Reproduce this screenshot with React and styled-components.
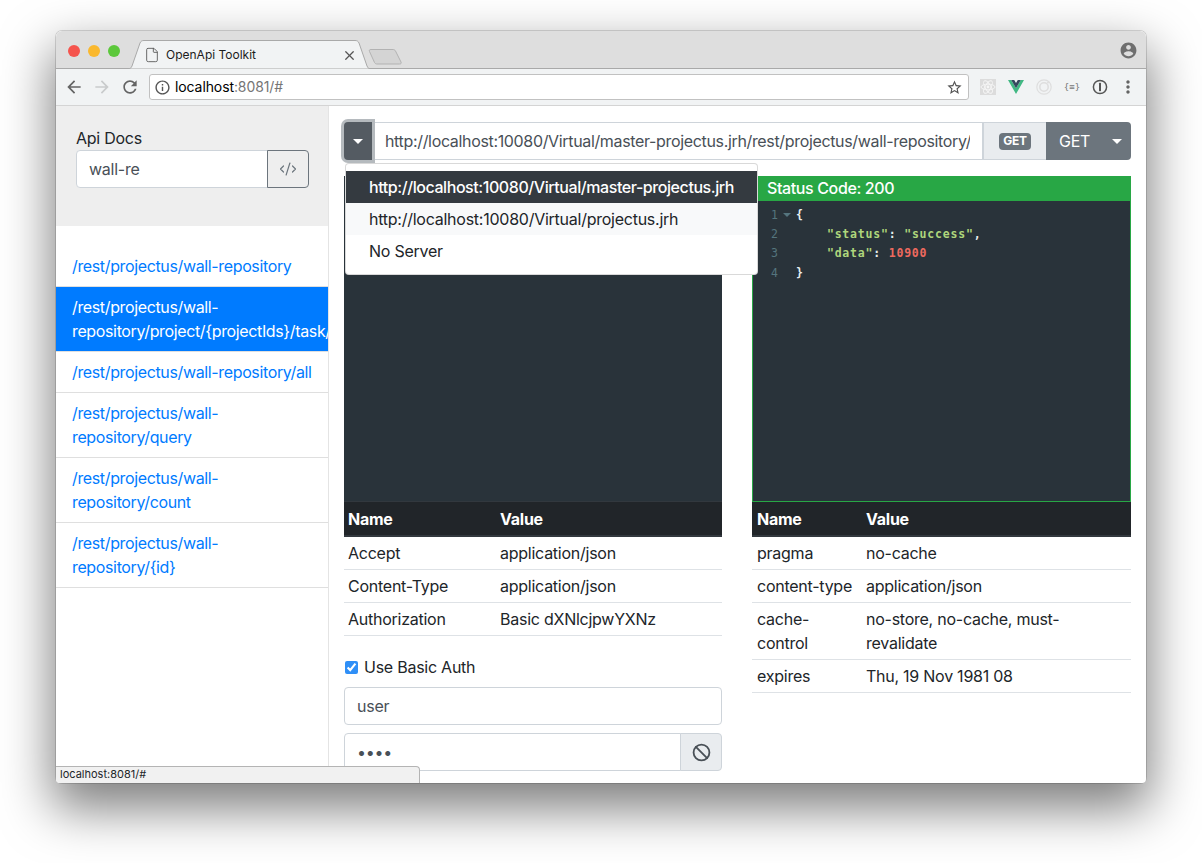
import React from "react";
import styled, { createGlobalStyle } from "styled-components";
import { CodeXml, File, Ban, X } from "lucide-react";

const GlobalStyle = createGlobalStyle`
  html, body {
    margin: 0;
    padding: 0;
    background: #fff;
  }
  body {
    font-family: Inter, "Liberation Sans", sans-serif;
    font-size: 16px;
    line-height: 24px;
    letter-spacing: -0.25px;
    color: #212529;
  }
  * {
    box-sizing: border-box;
  }
`;

const Page = styled.div`
  width: 1202px;
  height: 863px;
  padding: 31px 56px 80px;
  overflow: hidden;
`;

const Window = styled.div`
  position: relative;
  width: 1090px;
  height: 752px;
  display: flex;
  flex-direction: column;
  border-radius: 6px 6px 4px 4px;
  background: #fff;
  overflow: hidden;
`;

const Shadow = styled.div`
  border-radius: 6px;
  box-shadow: 0 0 0 1px rgba(0, 0, 0, 0.14), 0 22px 50px 4px rgba(0, 0, 0, 0.5);
`;

const TitleBar = styled.div`
  height: 38px;
  flex: none;
  display: flex;
  align-items: flex-end;
  padding-left: 12px;
  background: #dedede;
  box-shadow: inset 0 -1px 0 #a9a9a9;
`;

const Lights = styled.div`
  display: flex;
  gap: 8px;
  align-self: flex-start;
  margin-top: 14px;
`;

const Light = styled.span`
  width: 12px;
  height: 12px;
  border-radius: 50%;
  background: ${(p) => p.$color};
`;

const Tab = styled.div`
  position: relative;
  width: 242px;
  height: 29px;
  margin-left: 8px;
  display: flex;
  align-items: center;
  padding: 1px 13px 0 16px;
  font-size: 12px;
  letter-spacing: 0;
  color: #1c1c1c;
`;

const TabShape = styled.svg`
  position: absolute;
  inset: 0;
`;

const TabIcon = styled(File)`
  position: relative;
  flex: none;
  margin-right: 6px;
  color: #555;
`;

const TabTitle = styled.span`
  position: relative;
  flex: 1;
`;

const TabClose = styled(X)`
  position: relative;
  flex: none;
  color: #555;
`;

const NewTab = styled.svg`
  margin: 0 0 4px -3px;
  flex: none;
`;

const TitleSpacer = styled.div`
  flex: 1;
`;

const Profile = styled.svg`
  align-self: center;
  margin-right: 8px;
  color: #6f6f6f;
`;

const ToolBar = styled.div`
  height: 37px;
  flex: none;
  display: flex;
  align-items: center;
  padding: 0 4px;
  background: #f1f3f4;
  border-bottom: 1px solid #d4d4d4;
`;

const ToolButton = styled.div`
  width: 28px;
  height: 28px;
  flex: none;
  display: flex;
  align-items: center;
  justify-content: center;
  color: ${(p) => p.$color || "#646464"};
`;

const Omnibox = styled.div`
  flex: 1;
  height: 26px;
  margin: 0 5px;
  display: flex;
  align-items: center;
  padding: 0 5px 0 4px;
  background: #fff;
  border: 1px solid #c1c1c1;
  border-radius: 3px;
  font-size: 14px;
  letter-spacing: -0.1px;
  color: #555;
`;

const OmniText = styled.span`
  flex: 1;
  margin-left: 4px;
  color: #000;
`;

const OmniMuted = styled.span`
  color: #767676;
`;

const ExtText = styled.span`
  font-family: "DejaVu Sans Mono", monospace;
  font-size: 9px;
  letter-spacing: 0;
  color: #777;
`;

const Content = styled.div`
  flex: 1;
  min-height: 0;
  display: flex;
`;

const Sidebar = styled.aside`
  width: 273px;
  flex: none;
  border-right: 1px solid #e4e4e4;
`;

const SideHead = styled.div`
  height: 120px;
  padding: 20px 19px 0 20px;
  background: #eee;
`;

const SideLabel = styled.div`
  height: 24px;
`;

const InputGroup = styled.div`
  display: flex;
  height: 38px;
`;

const TextField = styled.input`
  flex: 1;
  min-width: 0;
  padding: 6px 12px;
  border: 1px solid #ced4da;
  border-radius: ${(p) => (p.$joined ? "4px 0 0 4px" : "4px")};
  background: #fff;
  font: inherit;
  letter-spacing: inherit;
  color: #495057;
  outline: none;
`;

const OutlineButton = styled.div`
  width: 42px;
  flex: none;
  display: flex;
  align-items: center;
  justify-content: center;
  margin-left: -1px;
  border: 1px solid #6c757d;
  border-radius: 0 4px 4px 0;
  color: #6c757d;
`;

const DocList = styled.ul`
  list-style: none;
  margin: 20px 0 0;
  padding: 0;
  overflow: hidden;
`;

const DocItem = styled.li`
  padding: 8px 14px 8px 16px;
  letter-spacing: -0.36px;
  color: ${(p) => (p.$active ? "#fff" : "#007bff")};
  background: ${(p) => (p.$active ? "#007bff" : "#fff")};
  background-clip: padding-box;
  border-bottom: 1px solid #dfdfdf;
`;

const Main = styled.main`
  flex: 1;
  min-width: 0;
  padding: 16px 15px 0;
  overflow: hidden;
`;

const UrlBar = styled.div`
  display: flex;
  height: 38px;
  margin-bottom: 16px;
`;

const Toggle = styled.div`
  position: relative;
  z-index: 1;
  width: 28px;
  margin-right: 3px;
  flex: none;
  display: flex;
  align-items: center;
  justify-content: center;
  background: #545b62;
  border-radius: 4px 0 0 4px;
  box-shadow: 0 0 0 3px rgba(108, 117, 125, 0.5);
`;

const Caret = styled.span`
  width: 0;
  height: 0;
  border-top: 5px solid #fff;
  border-left: 5px solid transparent;
  border-right: 5px solid transparent;
`;

const UrlInput = styled.input`
  flex: 1;
  min-width: 0;
  padding: 6px 12px 6px 10px;
  border: 1px solid #ced4da;
  border-left: none;
  background: #fff;
  font: inherit;
  letter-spacing: -0.34px;
  color: #495057;
  outline: none;
`;

const Addon = styled.div`
  width: 63px;
  flex: none;
  display: flex;
  align-items: center;
  justify-content: center;
  background: #e9ecef;
  border: 1px solid #ced4da;
  border-right: none;
`;

const Badge = styled.span`
  padding: 0 4px;
  height: 17px;
  display: flex;
  align-items: center;
  border-radius: 4px;
  background: #6c757d;
  color: #fff;
  font-size: 12px;
  font-weight: 700;
`;

const MethodButton = styled.div`
  width: 85px;
  flex: none;
  display: flex;
  align-items: center;
  justify-content: space-between;
  padding: 0 9px 0 13px;
  background: #6c757d;
  border-radius: 0 4px 4px 0;
  color: #fff;
`;

const ServerMenu = styled.div`
  position: absolute;
  z-index: 2;
  left: 289px;
  top: 132px;
  width: 413px;
  padding: 7px 0;
  background: #fff;
  border: 1px solid rgba(0, 0, 0, 0.15);
  border-radius: 4px;
`;

const ServerItem = styled.div`
  height: 32px;
  padding: 4px 23px;
  white-space: nowrap;
  letter-spacing: ${(p) => (p.$active ? "-0.43px" : "inherit")};
  color: ${(p) => (p.$active ? "#fff" : "#212529")};
  font-weight: ${(p) => (p.$active ? 500 : 400)};
  background: ${(p) => (p.$active ? "#343a40" : p.$hover ? "#f8f9fa" : "transparent")};
`;

const Columns = styled.div`
  display: grid;
  grid-template-columns: 378px 379px;
  column-gap: 30px;
`;

const Editor = styled.div`
  height: ${(p) => p.$height}px;
  background: #29333a;
  border-left: ${(p) => (p.$framed ? "1px solid #28a745" : "none")};
  border-right: ${(p) => (p.$framed ? "1px solid #28a745" : "none")};
  border-bottom: 1px solid ${(p) => (p.$framed ? "#28a745" : "#32383e")};
  overflow: hidden;
`;

const StatusBar = styled.div`
  height: 25px;
  padding-left: 15px;
  background: #28a745;
  color: #fff;
  font-weight: 500;
  line-height: 25px;
  letter-spacing: -0.38px;
`;

const CodeLines = styled.div`
  padding-top: 4px;
  font-family: "DejaVu Sans Mono", monospace;
  font-size: 11.5px;
  font-weight: 700;
  letter-spacing: 0;
  color: #e8eef0;
`;

const CodeLine = styled.div`
  display: flex;
  align-items: center;
  height: 19.4px;
`;

const LineNo = styled.span`
  width: 25px;
  flex: none;
  text-align: right;
  font-weight: 400;
  color: #55757e;
`;

const Fold = styled.span`
  width: 18px;
  flex: none;
  display: flex;
  justify-content: center;
`;

const FoldMark = styled.span`
  width: 0;
  height: 0;
  border-top: 4px solid #55757e;
  border-left: 4px solid transparent;
  border-right: 4px solid transparent;
`;

const Code = styled.span`
  white-space: pre;
  letter-spacing: 0.8px;
`;

const Str = styled.span`
  color: #afd67c;
`;

const Num = styled.span`
  color: #ef6a5f;
`;

const KvTable = styled.table`
  width: 100%;
  table-layout: fixed;
  border-collapse: separate;
  border-spacing: 0;
`;

const Th = styled.th`
  width: ${(p) => p.$width}px;
  height: 35px;
  padding: 0 0 0 ${(p) => p.$pad}px;
  text-align: left;
  font-weight: 700;
  color: #fff;
  background: #212529;
  border-bottom: 2px solid #32383e;
`;

const Td = styled.td`
  padding: 4px 12px 4px ${(p) => p.$pad}px;
  vertical-align: top;
  border-bottom: 1px solid #dee2e6;
`;

const AuthForm = styled.div`
  margin-top: 19px;
  display: flex;
  flex-direction: column;
  gap: 8px;
`;

const CheckRow = styled.label`
  display: flex;
  align-items: center;
  height: 24px;
`;

const Check = styled.input`
  width: 13px;
  height: 13px;
  margin: 0 6px 0 1px;
  accent-color: #2f8ff7;
`;

const Append = styled.div`
  width: 42px;
  flex: none;
  display: flex;
  align-items: center;
  justify-content: center;
  margin-left: -1px;
  background: #e9ecef;
  border: 1px solid #ced4da;
  border-radius: 0 4px 4px 0;
  color: #495057;
`;

const StatusBubble = styled.div`
  position: absolute;
  z-index: 3;
  left: 0;
  bottom: 0;
  width: 364px;
  height: 17px;
  padding-left: 4px;
  background: #f1f1f1;
  border-top: 1px solid #b4b4b4;
  border-right: 1px solid #b4b4b4;
  border-radius: 0 4px 0 0;
  font-size: 11px;
  line-height: 15px;
  letter-spacing: 0;
`;

const docs = [
  { text: "/rest/projectus/wall-repository" },
  { text: "/rest/projectus/wall-repository/project/{projectIds}/task/count", active: true },
  { text: "/rest/projectus/wall-repository/all" },
  { text: "/rest/projectus/wall-repository/query" },
  { text: "/rest/projectus/wall-repository/count" },
  { text: "/rest/projectus/wall-repository/{id}" },
];

const requestHeaders = [
  ["Accept", "application/json"],
  ["Content-Type", "application/json"],
  ["Authorization", "Basic dXNlcjpwYXNz"],
];

const responseHeaders = [
  ["pragma", "no-cache"],
  ["content-type", "application/json"],
  ["cache-control", "no-store, no-cache, must-revalidate"],
  ["expires", "Thu, 19 Nov 1981 08"],
];

const Mat = ({ d, size = 20 }) => (
  <svg width={size} height={size} viewBox="0 0 24 24" fill="currentColor">
    <path d={d} />
  </svg>
);

const ICON = {
  back: "M20 11H7.83l5.59-5.59L12 4l-8 8 8 8 1.41-1.41L7.83 13H20v-2z",
  forward: "M12 4l-1.41 1.41L16.17 11H4v2h12.17l-5.58 5.59L12 20l8-8z",
  reload:
    "M17.65 6.35C16.2 4.9 14.21 4 12 4c-4.42 0-7.99 3.58-7.99 8s3.57 8 7.99 8c3.73 0 6.84-2.55 7.73-6h-2.08c-.82 2.33-3.04 4-5.65 4-3.31 0-6-2.69-6-6s2.69-6 6-6c1.66 0 3.14.69 4.22 1.78L13 11h7V4l-2.35 2.35z",
  info: "M11 17h2v-6h-2v6zm1-15C6.48 2 2 6.48 2 12s4.48 10 10 10 10-4.48 10-10S17.52 2 12 2zm0 18c-4.41 0-8-3.59-8-8s3.59-8 8-8 8 3.59 8 8-3.59 8-8 8zM11 9h2V7h-2v2z",
  star: "M22 9.24l-7.19-.62L12 2 9.19 8.63 2 9.24l5.46 4.73L5.82 21 12 17.27 18.18 21l-1.63-7.03L22 9.24zM12 15.4l-3.76 2.27 1-4.28-3.32-2.88 4.38-.38L12 6.1l1.71 4.04 4.38.38-3.32 2.88 1 4.28L12 15.4z",
  more: "M12 8c1.1 0 2-.9 2-2s-.9-2-2-2-2 .9-2 2 .9 2 2 2zm0 2c-1.1 0-2 .9-2 2s.9 2 2 2 2-.9 2-2-.9-2-2-2zm0 6c-1.1 0-2 .9-2 2s.9 2 2 2 2-.9 2-2-.9-2-2-2z",
  account:
    "M12 2C6.48 2 2 6.48 2 12s4.48 10 10 10 10-4.48 10-10S17.52 2 12 2zm0 3c1.66 0 3 1.34 3 3s-1.34 3-3 3-3-1.34-3-3 1.34-3 3-3zm0 14.2c-2.5 0-4.71-1.28-6-3.22.03-1.99 4-3.08 6-3.08 1.99 0 5.97 1.09 6 3.08-1.29 1.94-3.5 3.22-6 3.22z",
};

const ReactExt = () => (
  <svg width="16" height="16" viewBox="0 0 16 16">
    <rect width="16" height="16" fill="#dcdcdc" />
    <g fill="none" stroke="#f6f6f6" strokeWidth="0.9">
      <ellipse cx="8" cy="8" rx="7" ry="2.8" />
      <ellipse cx="8" cy="8" rx="7" ry="2.8" transform="rotate(60 8 8)" />
      <ellipse cx="8" cy="8" rx="7" ry="2.8" transform="rotate(120 8 8)" />
    </g>
    <circle cx="8" cy="8" r="1.4" fill="#f6f6f6" />
  </svg>
);

const VueExt = () => (
  <svg width="16" height="14" viewBox="0 0 16 14">
    <path d="M0 0h3.2L8 8.2 12.8 0H16L8 14z" fill="#41b883" />
    <path d="M3.2 0h3L8 3.1 9.8 0h3L8 8.2z" fill="#35495e" />
  </svg>
);

const RingExt = () => (
  <svg width="16" height="16" viewBox="0 0 16 16" fill="none" stroke="#dedede">
    <circle cx="8" cy="8" r="7.2" strokeWidth="1.2" />
    <circle cx="8" cy="8" r="4.2" strokeWidth="1.6" />
    <circle cx="12" cy="3.6" r="1" fill="#dedede" stroke="none" />
  </svg>
);

const OnePassword = () => (
  <svg width="16" height="16" viewBox="0 0 16 16" fill="none">
    <circle cx="8" cy="8" r="6.6" stroke="#555" strokeWidth="1.5" />
    <rect x="7" y="3.8" width="2" height="8.4" rx="0.6" fill="#555" />
  </svg>
);

const KvRows = ({ rows, pad }) =>
  rows.map(([name, value]) => (
    <tr key={name}>
      <Td $pad={pad}>{name}</Td>
      <Td $pad={0}>{value}</Td>
    </tr>
  ));

export default function App() {
  return (
    <Page>
      <GlobalStyle />
      <Shadow>
        <Window>
          <TitleBar>
            <Lights>
              <Light $color="#f5544d" />
              <Light $color="#fab82e" />
              <Light $color="#5cc83b" />
            </Lights>
            <Tab>
              <TabShape width="242" height="29" viewBox="0 0 242 29">
                <path
                  d="M0 29 C2 29 3 28 4 26 L12 3 C13 1 14 0.5 16 0.5 H227 C229 0.5 230 1 231 3 L239 26 C240 28 241 29 242 29 Z"
                  fill="#f1f3f4"
                  stroke="#a9a9a9"
                />
              </TabShape>
              <TabIcon size={16} strokeWidth={1.3} />
              <TabTitle>OpenApi Toolkit</TabTitle>
              <TabClose size={15} strokeWidth={2} />
            </Tab>
            <NewTab width="36" height="17" viewBox="0 0 36 17">
              <path
                d="M4 1.5 H26 C27 1.5 28 2 28.5 3 L34 14 C34.5 15.5 34 16 32.5 16 H10 C9 16 8 15.5 7.5 14.5 L2.5 3.5 C2 2 2.5 1.5 4 1.5 Z"
                fill="#d4d4d4"
                stroke="#b2b2b2"
              />
            </NewTab>
            <TitleSpacer />
            <Profile width="19" height="19" viewBox="0 0 24 24" fill="currentColor">
              <path d={ICON.account} />
            </Profile>
          </TitleBar>
          <ToolBar>
            <ToolButton><Mat d={ICON.back} /></ToolButton>
            <ToolButton $color="#c9cbcc"><Mat d={ICON.forward} /></ToolButton>
            <ToolButton><Mat d={ICON.reload} /></ToolButton>
            <Omnibox>
              <Mat d={ICON.info} size={17} />
              <OmniText>
                localhost<OmniMuted>:8081/#</OmniMuted>
              </OmniText>
              <Mat d={ICON.star} size={17} />
            </Omnibox>
            <ToolButton><ReactExt /></ToolButton>
            <ToolButton><VueExt /></ToolButton>
            <ToolButton><RingExt /></ToolButton>
            <ToolButton><ExtText>{"{≡}"}</ExtText></ToolButton>
            <ToolButton><OnePassword /></ToolButton>
            <ToolButton><Mat d={ICON.more} /></ToolButton>
          </ToolBar>
          <Content>
            <Sidebar>
              <SideHead>
                <SideLabel>Api Docs</SideLabel>
                <InputGroup>
                  <TextField $joined readOnly value="wall-re" />
                  <OutlineButton>
                    <CodeXml size={18} strokeWidth={1.6} />
                  </OutlineButton>
                </InputGroup>
              </SideHead>
              <DocList>
                {docs.map((doc) => (
                  <DocItem key={doc.text} $active={doc.active}>
                    {doc.text}
                  </DocItem>
                ))}
              </DocList>
            </Sidebar>
            <Main>
              <UrlBar>
                <Toggle><Caret /></Toggle>
                <UrlInput
                  readOnly
                  value="http://localhost:10080/Virtual/master-projectus.jrh/rest/projectus/wall-repository/project/1/task/count"
                />
                <Addon><Badge>GET</Badge></Addon>
                <MethodButton>
                  GET
                  <Caret />
                </MethodButton>
              </UrlBar>
              <Columns>
                <section>
                  <Editor $height={326} />
                  <KvTable>
                    <thead>
                      <tr>
                        <Th $width={156} $pad={4}>Name</Th>
                        <Th $pad={0}>Value</Th>
                      </tr>
                    </thead>
                    <tbody>
                      <KvRows rows={requestHeaders} pad={4} />
                    </tbody>
                  </KvTable>
                  <AuthForm>
                    <CheckRow>
                      <Check type="checkbox" checked readOnly />
                      Use Basic Auth
                    </CheckRow>
                    <InputGroup>
                      <TextField readOnly value="user" />
                    </InputGroup>
                    <InputGroup>
                      <TextField $joined readOnly type="password" value="pass" />
                      <Append><Ban size={19} strokeWidth={2.3} /></Append>
                    </InputGroup>
                  </AuthForm>
                </section>
                <section>
                  <StatusBar>Status Code: 200</StatusBar>
                  <Editor $height={301} $framed>
                    <CodeLines>
                      <CodeLine>
                        <LineNo>1</LineNo>
                        <Fold><FoldMark /></Fold>
                        <Code>{"{"}</Code>
                      </CodeLine>
                      <CodeLine>
                        <LineNo>2</LineNo>
                        <Fold />
                        <Code>
                          {"    "}<Str>"status"</Str>: <Str>"success"</Str>,
                        </Code>
                      </CodeLine>
                      <CodeLine>
                        <LineNo>3</LineNo>
                        <Fold />
                        <Code>
                          {"    "}<Str>"data"</Str>: <Num>10900</Num>
                        </Code>
                      </CodeLine>
                      <CodeLine>
                        <LineNo>4</LineNo>
                        <Fold />
                        <Code>{"}"}</Code>
                      </CodeLine>
                    </CodeLines>
                  </Editor>
                  <KvTable>
                    <thead>
                      <tr>
                        <Th $width={114} $pad={5}>Name</Th>
                        <Th $pad={0}>Value</Th>
                      </tr>
                    </thead>
                    <tbody>
                      <KvRows rows={responseHeaders} pad={5} />
                    </tbody>
                  </KvTable>
                </section>
              </Columns>
            </Main>
          </Content>
          <ServerMenu>
            <ServerItem $active>http://localhost:10080/Virtual/master-projectus.jrh</ServerItem>
            <ServerItem $hover>http://localhost:10080/Virtual/projectus.jrh</ServerItem>
            <ServerItem>No Server</ServerItem>
          </ServerMenu>
          <StatusBubble>localhost:8081/#</StatusBubble>
        </Window>
      </Shadow>
    </Page>
  );
}
